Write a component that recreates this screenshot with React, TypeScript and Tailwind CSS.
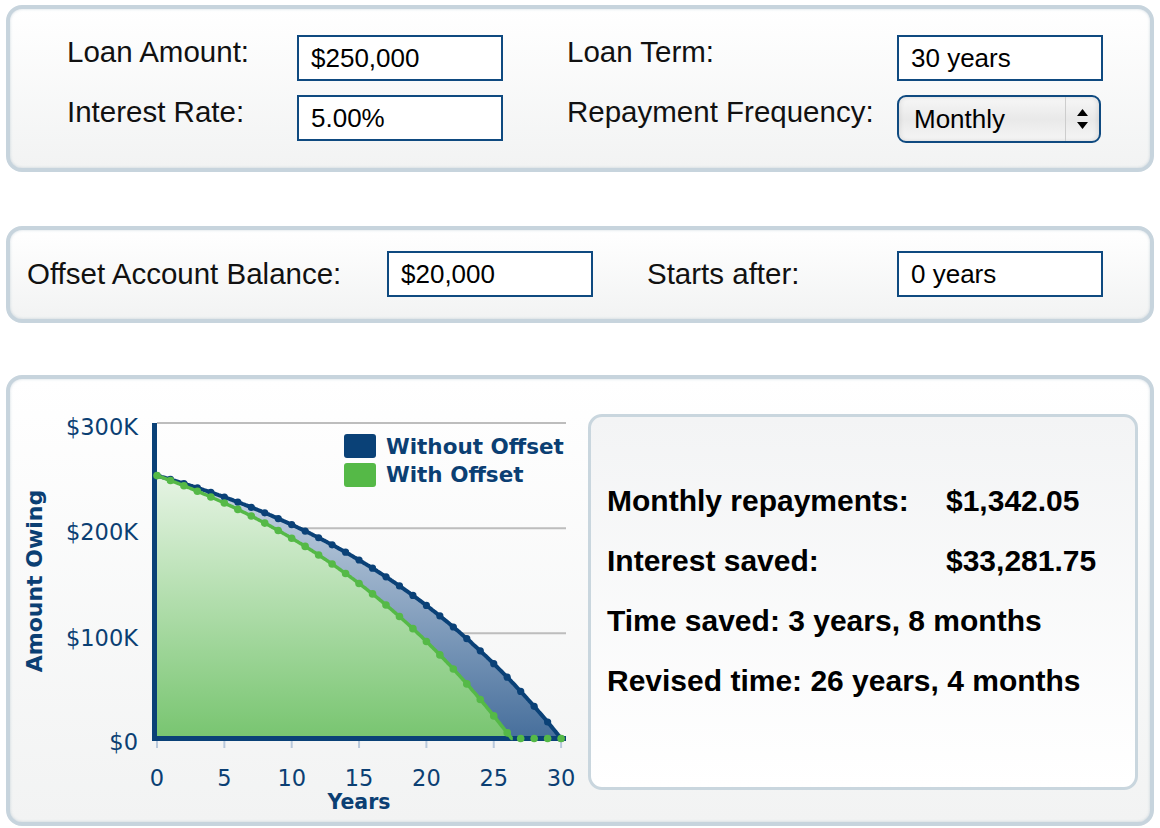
import React from 'react';

const LOAN = 250000;
const RATE = 0.05 / 12;
const MONTHS = 360;
const OFFSET = 20000;
const PAYMENT = (LOAN * RATE) / (1 - Math.pow(1 + RATE, -MONTHS));

// chart is drawn in page coordinates (see viewBox below)
const xOf = (month: number) => 157 + (month / 12) * 13.47;
const yOf = (balance: number) => 738.5 - (balance / 300000) * 315.5;

const balances = (offset: number) => {
  const out = [LOAN];
  let b = LOAN;
  for (let m = 1; m <= MONTHS; m++) {
    const interest = Math.max(0, b - offset) * RATE;
    b = Math.max(0, b + interest - PAYMENT);
    out.push(b);
  }
  return out;
};

const toPath = (pts: number[]) =>
  pts.map((b, m) => `${m === 0 ? 'M' : 'L'}${xOf(m).toFixed(1)} ${yOf(b).toFixed(1)}`).join(' ');

const withoutOffset = balances(0);
const withOffset = balances(OFFSET);
const paidOffAt = withOffset.findIndex((b) => b <= 0);
const withOffsetLine = withOffset.slice(0, paidOffAt + 1);

const years = Array.from({ length: 31 }, (_, i) => i);

interface PanelProps {
  className?: string;
  children: React.ReactNode;
}

const Panel = ({ className = '', children }: PanelProps) => (
  <div
    className={`w-[1148px] rounded-[16px] border-4 border-[#c7d4dd] bg-linear-to-b from-white to-[#f2f3f3] shadow-[inset_0_0_3px_rgba(120,150,170,0.35)] ${className}`}
  >
    {children}
  </div>
);

const Field = ({ value }: { value: string }) => (
  <input
    readOnly
    value={value}
    className="h-[46px] w-[206px] border-2 border-[#0f4a80] bg-white px-[12px] text-[26px] text-black outline-none"
  />
);

const Label = ({ children }: { children: React.ReactNode }) => (
  <span className="text-[29.5px] leading-[34px] text-[#111]">{children}</span>
);

const FrequencySelect = () => (
  <div className="flex h-[48px] w-[204px] items-center rounded-[9px] border-2 border-[#0f4a80] bg-linear-to-b from-[#f7f7f7] via-[#e9e9e9] to-[#f5f5f5] shadow-[inset_2px_0_4px_rgba(0,0,0,0.06),inset_-2px_0_4px_rgba(0,0,0,0.08)]">
    <span className="flex-1 pl-[15px] text-[26px] text-black">Monthly</span>
    <div className="h-full w-px bg-[#cdcdcd]" />
    <div className="flex w-[33px] flex-col items-center justify-center gap-[6px]">
      <svg width="11" height="7" viewBox="0 0 11 7">
        <path d="M5.5 0 L11 7 L0 7 Z" fill="#000" />
      </svg>
      <svg width="11" height="7" viewBox="0 0 11 7">
        <path d="M0 0 L11 0 L5.5 7 Z" fill="#000" />
      </svg>
    </div>
  </div>
);

const BLUE = '#0a4177';
const GREEN = '#55b947';
const INK = '#0b3f73';

const Chart = () => (
  <svg
    width="570"
    height="443"
    viewBox="10 379 570 443"
    className="shrink-0 font-['DejaVu_Sans',sans-serif]"
  >
    <defs>
      <linearGradient id="blueFill" gradientUnits="userSpaceOnUse" x1="0" y1="476" x2="0" y2="738">
        <stop offset="0" stopColor="#cdd9e6" />
        <stop offset="1" stopColor="#476f9c" />
      </linearGradient>
      <linearGradient id="greenFill" gradientUnits="userSpaceOnUse" x1="0" y1="476" x2="0" y2="738">
        <stop offset="0" stopColor="#e6f4e4" />
        <stop offset="1" stopColor="#78c570" />
      </linearGradient>
    </defs>

    {/* grid */}
    {[300000, 200000, 100000].map((v) => (
      <line key={v} x1="157" x2="566" y1={yOf(v)} y2={yOf(v)} stroke="#bdbdbd" strokeWidth="2" />
    ))}

    {/* areas */}
    <path d={`${toPath(withoutOffset)} L157 738.5 Z`} fill="url(#blueFill)" />
    <path d={`${toPath(withOffsetLine)} L157 738.5 Z`} fill="url(#greenFill)" />

    {/* axes */}
    <rect x="152" y="423" width="5" height="318" fill={BLUE} />
    <rect x="152" y="736" width="414" height="5" fill={BLUE} />
    {[0, 5, 10, 15, 20, 25, 30].map((y) => (
      <line key={y} x1={xOf(y * 12)} x2={xOf(y * 12)} y1="741" y2="748" stroke="#b9c9dc" strokeWidth="2" />
    ))}

    {/* lines + yearly dots */}
    <path d={toPath(withoutOffset)} fill="none" stroke={BLUE} strokeWidth="4" strokeLinejoin="round" />
    {years.map((y) => (
      <circle key={`b${y}`} cx={xOf(y * 12)} cy={yOf(withoutOffset[y * 12])} r="3.6" fill={BLUE} />
    ))}
    <path d={toPath(withOffsetLine)} fill="none" stroke={GREEN} strokeWidth="3.5" strokeLinejoin="round" />
    {years.map((y) => (
      <circle key={`g${y}`} cx={xOf(y * 12)} cy={yOf(withOffset[y * 12])} r="3.8" fill={GREEN} />
    ))}

    {/* y labels */}
    {[
      ['$300K', 435],
      ['$200K', 540],
      ['$100K', 646],
      ['$0', 750]
    ].map(([t, y]) => (
      <text key={t} x="138" y={y} textAnchor="end" fontSize="22.5" fill={INK}>
        {t}
      </text>
    ))}

    {/* x labels */}
    {[0, 5, 10, 15, 20, 25, 30].map((y) => (
      <text key={y} x={xOf(y * 12)} y="786" textAnchor="middle" fontSize="22.5" fill={INK}>
        {y}
      </text>
    ))}
    <text x="359" y="809" textAnchor="middle" fontSize="20.5" fontWeight="bold" fill={INK}>
      Years
    </text>
    <text
      x="42"
      y="581"
      textAnchor="middle"
      fontSize="22"
      fontWeight="bold"
      fill={INK}
      transform="rotate(-90 42 581)"
    >
      Amount Owing
    </text>

    {/* legend */}
    <rect x="344" y="434" width="32" height="24" rx="3" fill={BLUE} />
    <text x="386" y="454" fontSize="21.5" fontWeight="bold" fill={INK}>
      Without Offset
    </text>
    <rect x="344" y="463" width="32" height="24" rx="3" fill={GREEN} />
    <text x="386" y="482" fontSize="21.5" fontWeight="bold" fill={INK}>
      With Offset
    </text>
  </svg>
);

const Results = () => (
  <div className="ml-[8px] mt-[35px] h-[376px] w-[550px] rounded-[14px] border-[3px] border-[#c9d6de] bg-linear-to-b from-[#f3f4f5] to-white pl-[16px] pt-[54px]">
    <div className="grid grid-cols-[339px_auto] text-[30px] font-bold leading-[60px] text-black">
      <span>Monthly repayments:</span>
      <span>$1,342.05</span>
      <span>Interest saved:</span>
      <span>$33,281.75</span>
      <span className="col-span-2">Time saved: 3 years, 8 months</span>
      <span className="col-span-2">Revised time: 26 years, 4 months</span>
    </div>
  </div>
);

const App = () => {
  return (
    <div className="flex h-[828px] w-[1160px] flex-col overflow-hidden bg-white pl-[6px] pt-[5px] font-['Liberation_Sans',Arial,sans-serif]">
      <Panel className="h-[167px] pl-[57px] pt-[26px]">
        <div className="grid grid-cols-[230px_206px_64px_330px_206px] items-start gap-y-[14px]">
          <Label>Loan Amount:</Label>
          <Field value="$250,000" />
          <div />
          <Label>Loan Term:</Label>
          <Field value="30 years" />

          <Label>Interest Rate:</Label>
          <Field value="5.00%" />
          <div />
          <Label>Repayment Frequency:</Label>
          <FrequencySelect />
        </div>
      </Panel>

      <Panel className="mt-[54px] h-[97px] pl-[17px] pt-[21px]">
        <div className="grid grid-cols-[360px_206px_54px_250px_206px] items-center">
          <Label>Offset Account Balance:</Label>
          <Field value="$20,000" />
          <div />
          <Label>Starts after:</Label>
          <Field value="0 years" />
        </div>
      </Panel>

      <Panel className="mt-[52px] flex h-[451px]">
        <Chart />
        <Results />
      </Panel>
    </div>
  );
};

export default App;
